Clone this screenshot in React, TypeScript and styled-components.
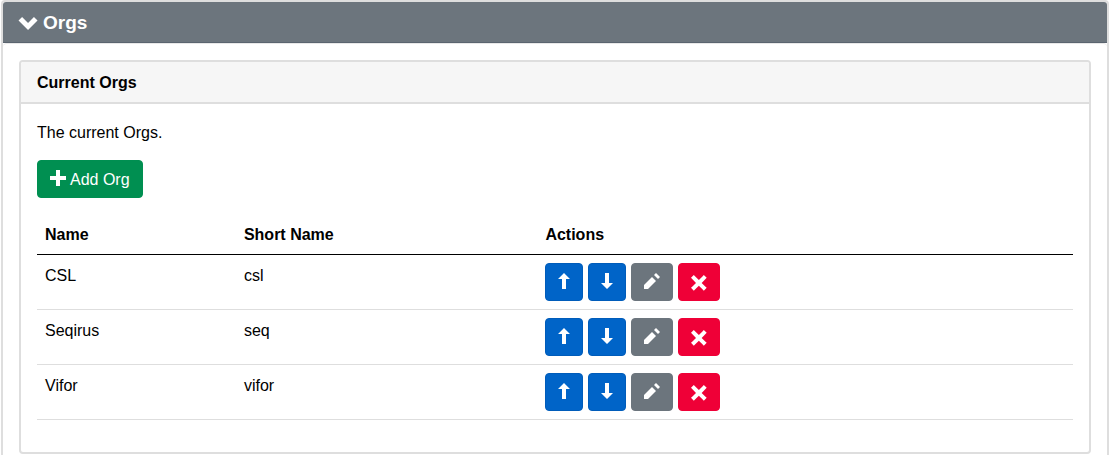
import React from 'react';
import styled, { createGlobalStyle, css } from 'styled-components';

const GlobalStyle = createGlobalStyle`
  *, *::before, *::after { box-sizing: border-box; }
  body {
    margin: 0;
    background: #fff;
    color: #000;
    font: 16px/26px "Liberation Sans", Arial, Helvetica, sans-serif;
  }
`;

const Page = styled.main`
  padding: 0 2px 0 1px;
`;

const Panel = styled.section`
  border: 2px solid #dedede;
  border-radius: 4px;
`;

const PanelHeader = styled.h2`
  display: flex;
  align-items: center;
  margin: 0;
  border-bottom: 1px solid #5a646f;
  border-radius: 3px 3px 0 0;
  background: #6c757d;
  color: #fff;
  font-size: 20px;
`;

const PanelToggle = styled.button`
  display: flex;
  flex: 1;
  align-items: center;
  gap: 5px;
  padding: 8px 16px 6px;
  border: 0;
  background: transparent;
  color: inherit;
  font: 700 19px/26px "Liberation Sans", Arial, Helvetica, sans-serif;
  cursor: pointer;
`;

const PanelBody = styled.div`
  padding: 16px;
  border-top: 1px solid #e8e8e8;
  border-radius: 4px 4px 0 0;
`;

const Card = styled.section`
  border: 2px solid #dedede;
  border-radius: 4px;
`;

const CardHeader = styled.h3`
  margin: 0;
  padding: 8px 16px 6px;
  border-bottom: 2px solid #dedede;
  border-radius: 2px 2px 0 0;
  background: #f6f6f6;
  font-size: 16px;
`;

const CardBody = styled.div`
  padding: 16px;
`;

const Intro = styled.p`
  margin: 0 0 14px;
`;

type Tone = 'success' | 'primary' | 'secondary' | 'danger';

const tones: Record<Tone, { fill: string; edge: string }> = {
  success: { fill: '#008f51', edge: '#008f51' },
  primary: { fill: '#0064c8', edge: '#005cba' },
  secondary: { fill: '#6c757d', edge: '#6c757d' },
  danger: { fill: '#ef0037', edge: '#ef0037' },
};

const Button = styled.button<{ $tone: Tone }>`
  display: inline-flex;
  align-items: center;
  gap: 4px;
  height: 38px;
  padding: 2px 12px 0;
  border-radius: 4px;
  color: #fff;
  font: inherit;
  cursor: pointer;
  ${({ $tone }) => css`
    border: 1px solid ${tones[$tone].edge};
    background: ${tones[$tone].fill};
  `}
`;

const Table = styled.table`
  width: 100%;
  margin: 16px 0;
  border-collapse: separate;
  border-spacing: 0;
  table-layout: fixed;
`;

const NameCol = styled.col`
  width: 19.2%;
`;

const ShortNameCol = styled.col`
  width: 29.1%;
`;

const HeadCell = styled.th`
  padding: 8px 8px 6px;
  border-bottom: 1px solid #000;
  text-align: left;
`;

const Cell = styled.td`
  padding: 8px;
  border-bottom: 1px solid #dedede;
  vertical-align: top;
`;

const Actions = styled.div`
  display: flex;
  gap: 5px;
`;

const Glyph = styled.svg`
  display: block;
  flex: none;
  margin-bottom: 4px;
  overflow: visible;
  fill: currentColor;
`;

const ChevronIcon = () => (
  <Glyph width="19" height="19" viewBox="0 0 8 8" aria-hidden="true">
    <path d="M1.500 0 0 1.500l4 4 4-4L6.500 0 4 2.500z" transform="translate(-0.200 2.100)" />
  </Glyph>
);

const PlusIcon = () => (
  <Glyph width="16" height="16" viewBox="0 0 8 8" aria-hidden="true">
    <path d="M3 0v3H0v2h3v3h2V5h3V3H5V0z" />
  </Glyph>
);

const UpIcon = () => (
  <Glyph width="12" height="16" viewBox="0 0 6 8" aria-hidden="true">
    <path d="M3 0 0 3h2v5h2V3h2z" />
  </Glyph>
);

const DownIcon = () => (
  <Glyph width="12" height="16" viewBox="0 0 6 8" aria-hidden="true">
    <path d="M2 0v5H0l3 3 3-3H4V0z" />
  </Glyph>
);

const PencilIcon = () => (
  <Glyph width="16" height="16" viewBox="0 0 8 8" aria-hidden="true">
    <path d="M6 0 5 1l2 2 1-1zM4 2 0 6v2h2l4-4z" />
  </Glyph>
);

const CrossIcon = () => (
  <Glyph width="16" height="16" viewBox="0 0 8 8" aria-hidden="true">
    <path
      d="M1.410 0 0 1.410l.72.72L2.500 3.940.72 5.720 0 6.410l1.410 1.440.72-.72 1.810-1.810 1.780 1.810.69.72 1.440-1.440-.72-.69-1.810-1.780 1.810-1.810.72-.72L6.410 0l-.69.72L3.940 2.500 2.130.72z"
      transform="translate(0 1)"
    />
  </Glyph>
);

interface Org {
  name: string;
  shortName: string;
}

const orgs: Org[] = [
  { name: 'CSL', shortName: 'csl' },
  { name: 'Seqirus', shortName: 'seq' },
  { name: 'Vifor', shortName: 'vifor' },
];

const OrgRow = ({ org }: { org: Org }) => (
  <tr>
    <Cell>{org.name}</Cell>
    <Cell>{org.shortName}</Cell>
    <Cell>
      <Actions>
        <Button type="button" $tone="primary" aria-label={`Move ${org.name} up`}>
          <UpIcon />
        </Button>
        <Button type="button" $tone="primary" aria-label={`Move ${org.name} down`}>
          <DownIcon />
        </Button>
        <Button type="button" $tone="secondary" aria-label={`Edit ${org.name}`}>
          <PencilIcon />
        </Button>
        <Button type="button" $tone="danger" aria-label={`Delete ${org.name}`}>
          <CrossIcon />
        </Button>
      </Actions>
    </Cell>
  </tr>
);

export default function App() {
  return (
    <>
      <GlobalStyle />
      <Page>
        <Panel>
          <PanelHeader>
            <PanelToggle type="button" aria-expanded="true">
              <ChevronIcon />
              Orgs
            </PanelToggle>
          </PanelHeader>
          <PanelBody>
            <Card>
              <CardHeader>Current Orgs</CardHeader>
              <CardBody>
                <Intro>The current Orgs.</Intro>
                <Button type="button" $tone="success">
                  <PlusIcon />
                  Add Org
                </Button>
                <Table>
                  <colgroup>
                    <NameCol />
                    <ShortNameCol />
                    <col />
                  </colgroup>
                  <thead>
                    <tr>
                      <HeadCell scope="col">Name</HeadCell>
                      <HeadCell scope="col">Short Name</HeadCell>
                      <HeadCell scope="col">Actions</HeadCell>
                    </tr>
                  </thead>
                  <tbody>
                    {orgs.map((org) => (
                      <OrgRow key={org.shortName} org={org} />
                    ))}
                  </tbody>
                </Table>
              </CardBody>
            </Card>
          </PanelBody>
        </Panel>
      </Page>
    </>
  );
}
